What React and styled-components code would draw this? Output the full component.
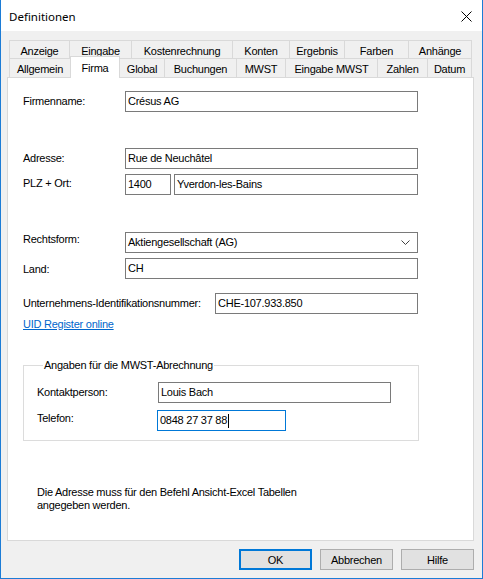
import React from "react";
import styled, { createGlobalStyle } from "styled-components";

const GlobalStyle = createGlobalStyle`
  body {
    margin: 0;
    font-family: "Liberation Sans", Arial, sans-serif;
    font-size: 11px;
    letter-spacing: -0.25px;
    color: #000;
  }
`;

const topTabs = [
  ["Anzeige", 61],
  ["Eingabe", 63],
  ["Kostenrechnung", 102],
  ["Konten", 58],
  ["Ergebnis", 56],
  ["Farben", 65],
  ["Anhänge", 64],
];

const bottomTabs = [
  ["Allgemein", 62],
  ["Firma", 50],
  ["Global", 46],
  ["Buchungen", 73],
  ["MWST", 50],
  ["Eingabe MWST", 93],
  ["Zahlen", 51],
  ["Datum", 45],
];

const App = () => {
  return (
    <>
      <GlobalStyle />
      <Window>
        <TitleBar>
          <Title>Definitionen</Title>
          <CloseIcon width="11" height="11" viewBox="0 0 11 11">
            <path d="M0.5 0.5 L10.5 10.5 M10.5 0.5 L0.5 10.5" stroke="#000" strokeWidth="1" fill="none" />
          </CloseIcon>
        </TitleBar>
        <Body>
          <TabStrip>
            <TabRow>
              {topTabs.map(([label, w]) => (
                <Tab key={label} $w={w} $h={18}>
                  {label}
                </Tab>
              ))}
            </TabRow>
            <TabRow>
              {bottomTabs.map(([label, w]) => (
                <Tab key={label} $w={w} $h={19} $active={label === "Firma"}>
                  {label}
                </Tab>
              ))}
            </TabRow>
          </TabStrip>
          <Panel>
            <Row>
              <Label $w={102} $off={4}>Firmenname:</Label>
              <TextBox $w={293}>Crésus AG</TextBox>
            </Row>
            <Row $mt={36}>
              <Label $w={102} $off={4}>Adresse:</Label>
              <TextBox $w={293}>Rue de Neuchâtel</TextBox>
            </Row>
            <Row $mt={5}>
              <Label $w={102} $off={3}>PLZ + Ort:</Label>
              <TextBox $w={46}>1400</TextBox>
              <TextBox $w={244} $ml={3}>Yverdon-les-Bains</TextBox>
            </Row>
            <Row $mt={37}>
              <Label $w={102} $off={1}>Rechtsform:</Label>
              <Combo $w={293}>
                <span>Aktiengesellschaft (AG)</span>
                <svg width="9" height="5" viewBox="0 0 9 5">
                  <polyline points="0.5,0.5 4.5,4.5 8.5,0.5" stroke="#404040" strokeWidth="1" fill="none" />
                </svg>
              </Combo>
            </Row>
            <Row $mt={5}>
              <Label $w={102} $off={5}>Land:</Label>
              <TextBox $w={293}>CH</TextBox>
            </Row>
            <Row $mt={14}>
              <Label $w={192} $off={4}>Unternehmens-Identifikationsnummer:</Label>
              <TextBox $w={203}>CHE-107.933.850</TextBox>
            </Row>
            <Link href="#">UID Register online</Link>
            <Group>
              <Legend>Angaben für die MWST-Abrechnung</Legend>
              <Row>
                <Label $w={121} $off={4}>Kontaktperson:</Label>
                <TextBox $w={233}>Louis Bach</TextBox>
              </Row>
              <Row $mt={7}>
                <Label $w={120} $off={2}>Telefon:</Label>
                <TextBox $w={129} $focused>
                  0848 27 37 88
                  <Caret />
                </TextBox>
              </Row>
            </Group>
            <Note>
              Die Adresse muss für den Befehl Ansicht-Excel Tabellen
              <br />
              angegeben werden.
            </Note>
          </Panel>
          <ButtonRow>
            <Button $default>OK</Button>
            <Button>Abbrechen</Button>
            <Button>Hilfe</Button>
          </ButtonRow>
        </Body>
      </Window>
    </>
  );
};

const Window = styled.div`
  width: 483px;
  height: 579px;
  box-sizing: border-box;
  border: 1px solid #1c7cd6;
  border-top: none;
  display: flex;
  flex-direction: column;
  background: #f0f0f0;
`;

const TitleBar = styled.div`
  height: 31px;
  flex: none;
  background: #fff;
  display: flex;
  align-items: center;
  justify-content: space-between;
  padding: 0 10px 0 8px;
`;

const Title = styled.div`
  font-family: "Noto Sans", "Liberation Sans", sans-serif;
  font-size: 11.5px;
  letter-spacing: 0;
  padding-top: 1px;
`;

const CloseIcon = styled.svg`
  display: block;
  margin-top: 1px;
`;

const Body = styled.div`
  flex: 1;
  display: flex;
  flex-direction: column;
  padding: 9px 8px 8px 6px;
`;

const TabStrip = styled.div`
  margin-left: 2px;
  display: flex;
  flex-direction: column;
`;

const TabRow = styled.div`
  display: flex;
  align-items: flex-end;
`;

const Tab = styled.div`
  box-sizing: border-box;
  width: ${(p) => p.$w}px;
  height: ${(p) => (p.$active ? p.$h + 3 : p.$h)}px;
  margin-left: -1px;
  &:first-child {
    margin-left: 0;
  }
  margin-top: ${(p) => (p.$active ? -2 : 0)}px;
  margin-bottom: ${(p) => (p.$active ? -1 : 0)}px;
  position: relative;
  z-index: ${(p) => (p.$active ? 2 : 1)};
  background: ${(p) => (p.$active ? "#fff" : "#f0f0f0")};
  border: 1px solid #d9d9d9;
  border-bottom: none;
  display: flex;
  align-items: center;
  justify-content: center;
  padding-top: ${(p) => (p.$active ? 0 : 2)}px;
  white-space: nowrap;
`;

const Panel = styled.div`
  box-sizing: border-box;
  height: 464px;
  width: 467px;
  background: #fff;
  border: 1px solid #d9d9d9;
  padding: 13px 0 0 15px;
  display: flex;
  flex-direction: column;
  align-items: flex-start;
`;

const Row = styled.div`
  display: flex;
  align-items: flex-start;
  margin-top: ${(p) => p.$mt || 0}px;
`;

const Label = styled.div`
  width: ${(p) => p.$w}px;
  flex: none;
  line-height: 13px;
  margin-top: ${(p) => p.$off}px;
  white-space: nowrap;
`;

const TextBox = styled.div`
  box-sizing: border-box;
  width: ${(p) => p.$w}px;
  height: 21px;
  margin-left: ${(p) => p.$ml || 0}px;
  border: 1px solid ${(p) => (p.$focused ? "#0078d7" : "#7a7a7a")};
  background: #fff;
  padding: 0 2px;
  line-height: 19px;
  white-space: nowrap;
  display: flex;
  align-items: center;
`;

const Caret = styled.span`
  display: inline-block;
  width: 1px;
  height: 14px;
  background: #000;
  margin-left: 1px;
`;

const Combo = styled(TextBox)`
  justify-content: space-between;
  padding-right: 7px;
`;

const Link = styled.a`
  color: #0066cc;
  text-decoration: underline;
  line-height: 13px;
  margin-top: 4px;
`;

const Group = styled.fieldset`
  box-sizing: border-box;
  width: 396px;
  margin: 28px 0 0 0;
  padding: 10px 0 9px 13px;
  border: 1px solid #dcdcdc;
  min-width: 0;
`;

const Legend = styled.legend`
  padding: 0 1px;
  margin-left: 6px;
  line-height: 13px;
`;

const Note = styled.div`
  margin: 45px 0 0 14px;
  line-height: 13px;
`;

const ButtonRow = styled.div`
  display: flex;
  justify-content: flex-end;
  gap: 8px;
  margin-top: 8px;
`;

const Button = styled.button`
  box-sizing: border-box;
  width: 73px;
  height: 21px;
  padding: 0;
  font-family: inherit;
  font-size: 11px;
  letter-spacing: -0.25px;
  color: #000;
  background: #e1e1e1;
  border: ${(p) => (p.$default ? "2px solid #0078d7" : "1px solid #adadad")};
`;

export default App;
